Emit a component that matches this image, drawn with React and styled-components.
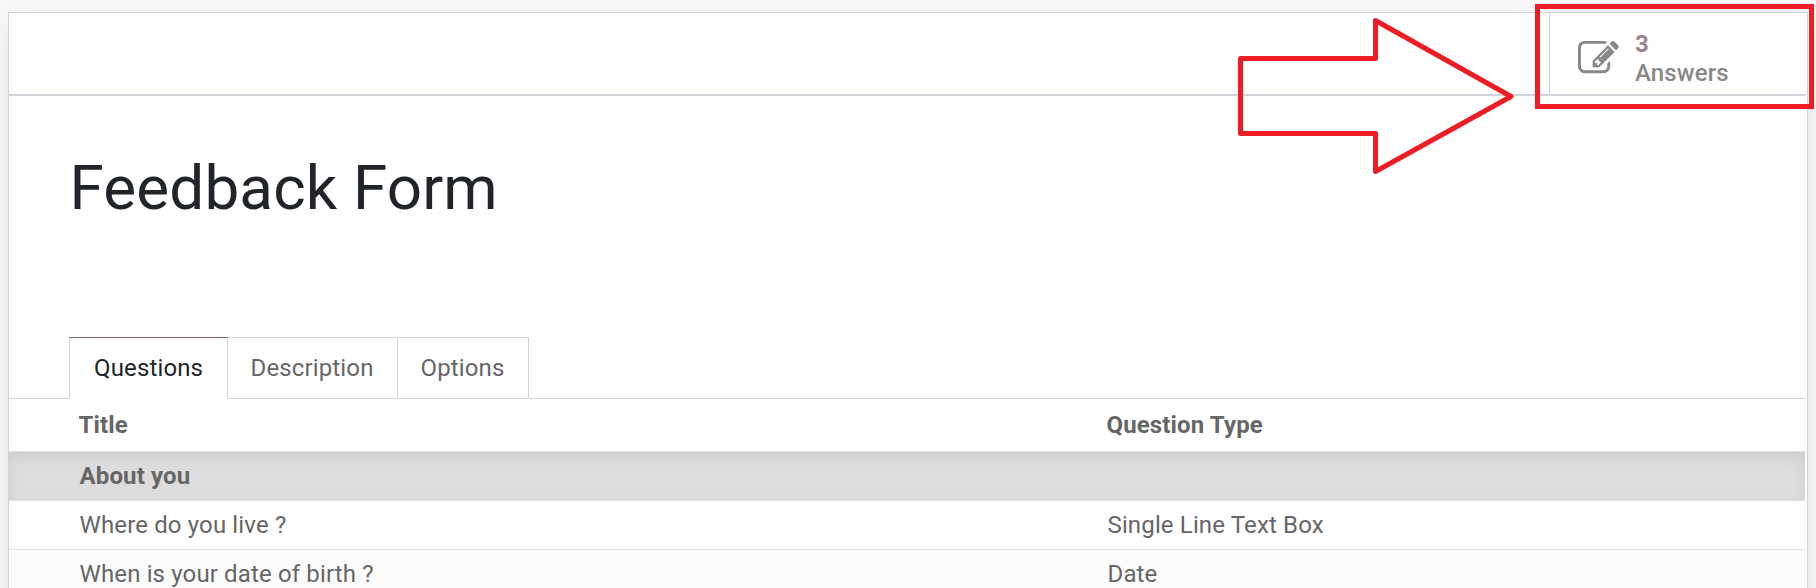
import React from "react";
import styled, { createGlobalStyle } from "styled-components";

const Global = createGlobalStyle`
  *, *::before, *::after { box-sizing: border-box; }
  body {
    margin: 0;
    background: #f8f8f8;
    font-family: Roboto, "Liberation Sans", sans-serif;
    font-size: 24px;
    letter-spacing: 0.14px;
    color: #666666;
    overflow: hidden;
  }
`;

const Page = styled.main`
  position: relative;
  height: 588px;
  padding: 12px 8px 0;
  overflow: hidden;
`;

const Sheet = styled.section`
  height: 640px;
  background: #fff;
  border: 1px solid #ced4da;
  box-shadow: 0 12px 36px -2px rgba(0, 0, 0, 0.085);
`;

const ButtonBox = styled.div`
  display: flex;
  justify-content: flex-end;
  height: 83px;
  margin-right: 1px;
  border-bottom: 2px solid #ced4da;
`;

const StatButton = styled.button`
  display: flex;
  align-items: center;
  width: 257px;
  padding: 9px 0 0 28px;
  background: transparent;
  border: 0;
  border-left: 1px solid #ced4da;
  color: #888888;
  font: 500 24px/29px Roboto, sans-serif;
  letter-spacing: 0.12px;
  text-align: left;
`;

const StatIcon = styled.svg`
  width: 41px;
  height: 41px;
  margin-right: 16px;
  fill: currentColor;
`;

const StatText = styled.div`
  padding-top: 2px;
`;

const StatValue = styled.div`
  color: #9b8490;
  font-weight: 700;
`;

const FormTitle = styled.h1`
  margin: 52px 0 0 60.5px;
  height: 80px;
  font-size: 62px;
  line-height: 80px;
  font-weight: 400;
  color: #212529;
`;

const Tabs = styled.nav`
  display: flex;
  height: 62px;
  margin: 109px 1px 0 0;
  padding-left: 60px;
  border-bottom: 1px solid #ced4da;
`;

const Tab = styled.a`
  height: 62px;
  width: ${(p) => p.$width}px;
  margin-right: -1px;
  padding-left: ${(p) => (p.$active ? 24 : 22.5)}px;
  border: 1px solid #ced4da;
  border-top-color: ${(p) => (p.$active ? "#7c6576" : "#ced4da")};
  border-bottom-color: ${(p) => (p.$active ? "#fff" : "#ced4da")};
  color: ${(p) => (p.$active ? "#212529" : "#666666")};
  position: relative;
  z-index: ${(p) => (p.$active ? 1 : 0)};
  line-height: 60px;
`;

const HeaderRow = styled.div`
  display: grid;
  grid-template-columns: 1028px 1fr;
  height: 53px;
  margin-right: 1px;
  padding-left: 69.5px;
  border-bottom: 1px solid #dee2e6;
  font-weight: 700;
  line-height: 52px;
`;

const Row = styled.div`
  display: grid;
  grid-template-columns: 1028px 1fr;
  height: 49px;
  margin-right: 2px;
  padding-left: 70.5px;
  border-bottom: 1px solid #dee2e6;
  line-height: 48px;
  background: ${(p) => (p.$striped ? "#fcfcfc" : "#fff")};
`;

const SectionRow = styled(Row)`
  background: #dddddd;
  font-weight: 700;
  box-shadow: inset 0 6px 16px -2px rgba(0, 0, 0, 0.08);
`;

const Annotation = styled.svg`
  position: absolute;
  inset: 0;
  pointer-events: none;
  fill: none;
  stroke: #ee1c24;
  stroke-width: 5;
`;

const rows = [
  { title: "Where do you live ?", type: "Single Line Text Box" },
  { title: "When is your date of birth ?", type: "Date", striped: true },
];

export default function App() {
  return (
    <Page>
      <Global />
      <Sheet>
        <ButtonBox>
          <StatButton>
            <StatIcon viewBox="0 0 1792 1792">
              <path d="M888 1184l116-116-152-152-116 116v56h96v96h56zm440-720q-16-16-33 1l-350 350q-17 17-1 33t33-1l350-350q17-17 1-33zm80 594v190q0 119-84.500 203.500t-203.500 84.500h-832q-119 0-203.500-84.500t-84.500-203.500v-832q0-119 84.500-203.500t203.500-84.500h832q63 0 117 25 15 7 18 23 3 17-9 29l-49 49q-14 14-32 8-23-6-45-6h-832q-66 0-113 47t-47 113v832q0 66 47 113t113 47h832q66 0 113-47t47-113v-126q0-13 9-22l64-64q15-15 35-7t20 29zm-96-738l288 288-672 672h-288v-288zm444 132l-92 92-288-288 92-92q28-28 68-28t68 28l152 152q28 28 28 68t-28 68z" />
            </StatIcon>
            <StatText>
              <StatValue>3</StatValue>
              <div>Answers</div>
            </StatText>
          </StatButton>
        </ButtonBox>
        <FormTitle>Feedback Form</FormTitle>
        <Tabs>
          <Tab $active $width={159}>Questions</Tab>
          <Tab $width={171}>Description</Tab>
          <Tab $width={132}>Options</Tab>
        </Tabs>
        <HeaderRow>
          <span>Title</span>
          <span>Question Type</span>
        </HeaderRow>
        <SectionRow>
          <span>About you</span>
        </SectionRow>
        {rows.map((r) => (
          <Row key={r.title} $striped={r.striped}>
            <span>{r.title}</span>
            <span>{r.type}</span>
          </Row>
        ))}
      </Sheet>
      <Annotation width="1816" height="588">
        <path strokeLinejoin="round" d="M1240.500 58.500H1375.500V20.500L1511 96.500L1375.500 171.500V133.500H1240.500Z" />
        <path d="M1537.500 6.500H1811.500V106.500H1537.500Z" />
      </Annotation>
    </Page>
  );
}
